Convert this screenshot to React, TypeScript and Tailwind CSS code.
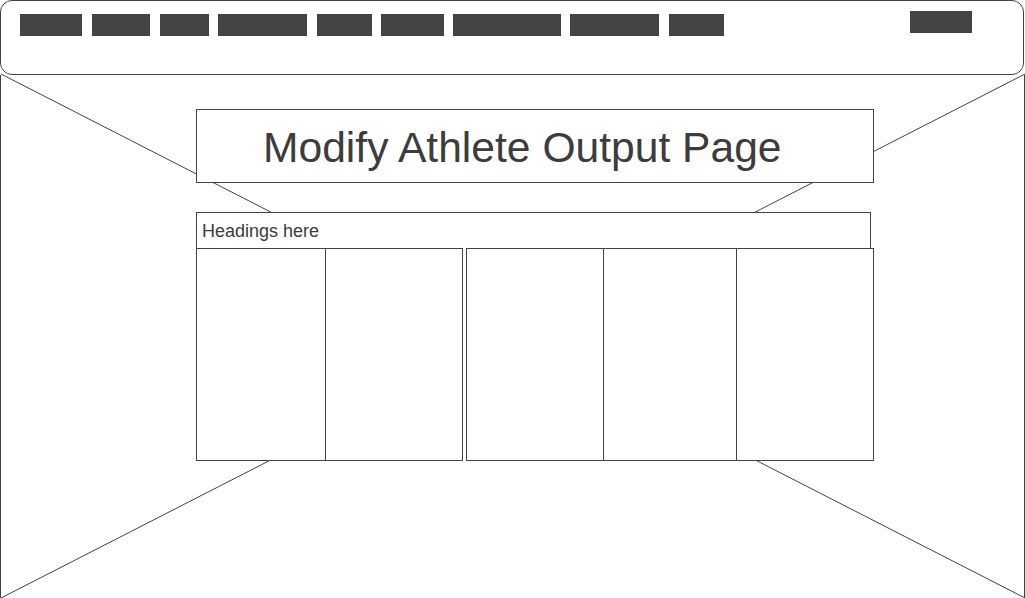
const navItems = [
  'w-[62px]',
  'w-[58px] ml-[10px]',
  'w-[49px] ml-[10px]',
  'w-[89px] ml-[9px]',
  'w-[55px] ml-[10px]',
  'w-[63px] ml-[9px]',
  'w-[108px] ml-[9px]',
  'w-[89px] ml-[9px]',
  'w-[55px] ml-[10px]',
];

function NavBar() {
  return (
    <header className="h-[75px] w-[1024px] rounded-[12px] border border-[#444] flex items-start justify-between bg-white">
      <nav className="flex mt-[13px] ml-[19px]">
        {navItems.map((cls, i) => (
          <div key={i} className={`h-[22px] bg-[#444] ${cls}`} />
        ))}
      </nav>
      <div className="h-[22px] w-[62px] bg-[#444] mt-[10px] mr-[51px]" />
    </header>
  );
}

function Backdrop() {
  // the big "placeholder" X behind the content
  return (
    <svg className="absolute inset-0 w-full h-full overflow-visible" xmlns="http://www.w3.org/2000/svg">
      <line x1="0" y1="-1" x2="1024" y2="523" stroke="#444" strokeWidth="1" />
      <line x1="1024" y1="-1" x2="0" y2="523" stroke="#444" strokeWidth="1" />
    </svg>
  );
}

export default function App() {
  return (
    <div className="w-[1025px] h-[598px] bg-white overflow-hidden text-[#3c3c3c] font-['Liberation_Sans',Arial,sans-serif]">
      <NavBar />
      <main className="relative w-[1025px] h-[523px] border-x border-[#444]">
        <Backdrop />
        <div className="relative flex flex-col ml-[195px] pt-[34px]">
          <div className="w-[678px] h-[74px] border border-[#444] bg-white pl-[66px] pt-[16px]">
            <h1 className="text-[42.6px] leading-[42px] whitespace-nowrap">Modify Athlete Output Page</h1>
          </div>

          <div className="mt-[29px] w-[675px] h-[36px] border border-b-0 border-[#444] bg-white pl-[5px] pt-[9px]">
            <p className="text-[18px] leading-[18px]">Headings here</p>
          </div>

          <div className="flex w-[678px] h-[213px] bg-white">
            <div className="flex w-[267px] border border-[#444]">
              <div className="w-[129px] border-r border-[#444]" />
              <div className="flex-1" />
            </div>
            <div className="flex w-[408px] ml-[3px] border border-[#444]">
              <div className="w-[137px] border-r border-[#444]" />
              <div className="w-[133px] border-r border-[#444]" />
              <div className="flex-1" />
            </div>
          </div>
        </div>
      </main>
    </div>
  );
}
